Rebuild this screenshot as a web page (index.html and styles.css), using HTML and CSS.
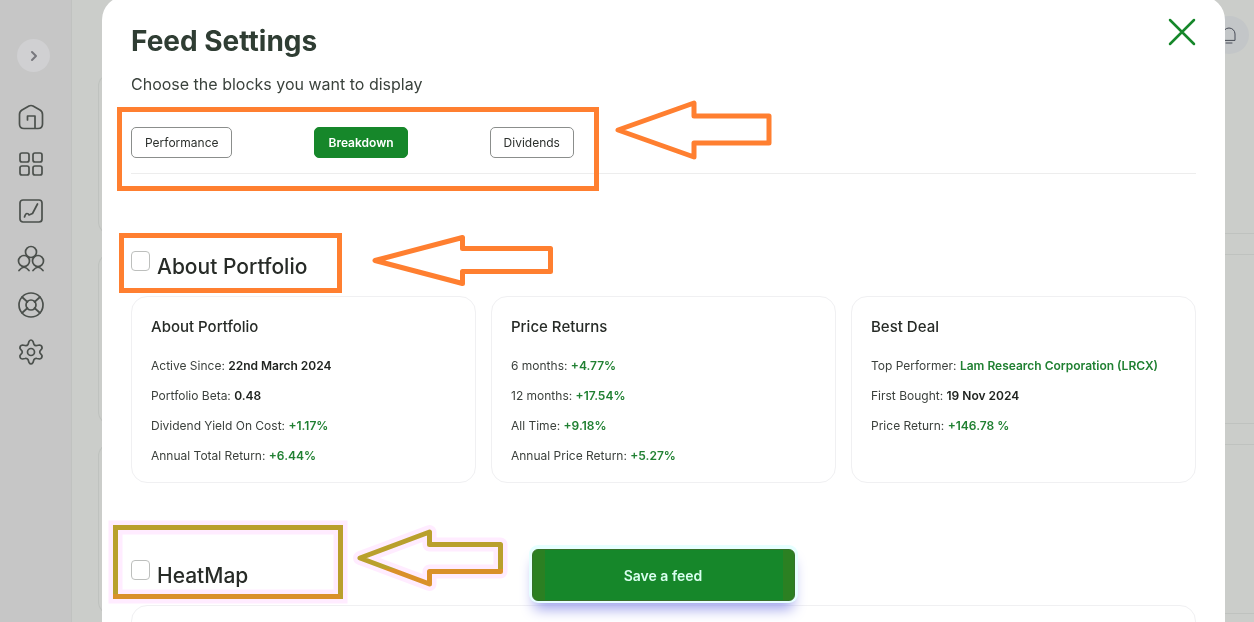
FILE: index.html
```html
<!DOCTYPE html>
<html lang="en">
<head>
<meta charset="utf-8">
<meta name="viewport" content="width=device-width, initial-scale=1">
<title>Feed Settings</title>
<link rel="stylesheet" href="styles.css">
</head>
<body>
<div class="page">
  <aside class="sidebar">
    <button class="expand" aria-label="Expand menu"><svg width="10" height="12" viewBox="0 0 10 12"><path d="M3 2l4 4-4 4"/></svg></button>
    <nav class="nav">
      <a href="#home" aria-label="Home"><svg width="28" height="28" viewBox="0 0 28 28"><path d="M7 25.500Q2.500 25.500 2.500 21V11.500Q2.500 8.500 5 7L12 3Q14 2 16 3L23 7Q25.500 8.500 25.500 11.500V21Q25.500 25.500 21 25.500H7M18 25V13H10.500V17"/></svg></a>
      <a href="#dashboard" aria-label="Dashboard"><svg width="28" height="28" viewBox="0 0 28 28"><rect x="3" y="3" width="9" height="9" rx="2"/><rect x="16" y="3" width="9" height="9" rx="2"/><rect x="3" y="16" width="9" height="9" rx="2"/><rect x="16" y="16" width="9" height="9" rx="2"/></svg></a>
      <a href="#charts" aria-label="Charts"><svg width="28" height="28" viewBox="0 0 28 28"><rect x="3" y="3" width="22" height="22" rx="3"/><path d="M7.500 20Q8.500 16.500 10 16.500T12 18L15.500 16.500L20.500 7"/></svg></a>
      <a href="#community" aria-label="Community"><svg width="28" height="28" viewBox="0 0 28 28"><circle cx="14" cy="8" r="5.500"/><circle cx="7" cy="17" r="5.500"/><circle cx="21" cy="17" r="5.500"/><path d="M2 26.500Q7 20 12 26.500M16 26.500Q21 20 26 26.500"/></svg></a>
      <a href="#help" aria-label="Help"><svg width="28" height="28" viewBox="0 0 28 28"><circle cx="14" cy="14" r="12"/><circle cx="14" cy="14" r="5"/><path d="M5 6l5.500 5M23 6l-5.500 5M5 22l5.500-5M23 22l-5.500-5"/></svg></a>
      <a href="#settings" aria-label="Settings"><svg width="28" height="28" viewBox="0 0 28 28"><path d="M12 3.500Q14 .500 16 3.500L17 6.500Q18 8 20 7.500L22.500 7Q25.500 7.500 25 10.500L23 13Q22.500 14 23 15L25 17.500Q25.500 20.500 22.500 21L20 20.500Q18 20 17 21.500L16 24.500Q14 27.500 12 24.500L11 21.500Q10 20 8 20.500L5.500 21Q2.500 20.500 3 17.500L5 15Q5.500 14 5 13L3 10.500Q2.500 7.500 5.500 7L8 7.500Q10 8 11 6.500Z"/><circle cx="14" cy="14" r="3.500"/></svg></a>
    </nav>
  </aside>
  <div class="backdrop">
    <div class="bell"><svg width="20" height="20" viewBox="0 0 20 20"><path d="M4 15V9a6 6 0 0 1 12 0v6zM7 18h6"/></svg></div>
    <div class="panel"></div>
    <div class="panel"></div>
    <div class="panel"></div>
  </div>
</div>

<div class="modal" role="dialog" aria-labelledby="title">
  <header class="head">
    <h1 id="title">Feed Settings</h1>
    <button class="close" aria-label="Close"><svg width="28" height="28" viewBox="0 0 28 28"><path d="M2 2l24 24M26 2L2 26"/></svg></button>
  </header>
  <p class="lead">Choose the blocks you want to display</p>
  <div class="tabs">
    <button class="tab">Performance</button>
    <button class="tab active">Breakdown</button>
    <button class="tab">Dividends</button>
  </div>

  <section class="block">
    <div class="block-head"><input type="checkbox" id="about"><label for="about">About Portfolio</label></div>
    <div class="cards">
      <article class="card">
        <h2>About Portfolio</h2>
        <p>Active Since: <b>22nd March 2024</b></p>
        <p>Portfolio Beta: <b>0.48</b></p>
        <p>Dividend Yield On Cost: <b class="up">+1.17%</b></p>
        <p>Annual Total Return: <b class="up">+6.44%</b></p>
      </article>
      <article class="card">
        <h2>Price Returns</h2>
        <p>6 months: <b class="up">+4.77%</b></p>
        <p>12 months: <b class="up">+17.54%</b></p>
        <p>All Time: <b class="up">+9.18%</b></p>
        <p>Annual Price Return: <b class="up">+5.27%</b></p>
      </article>
      <article class="card">
        <h2>Best Deal</h2>
        <p>Top Performer: <b class="up">Lam Research Corporation (LRCX)</b></p>
        <p>First Bought: <b>19 Nov 2024</b></p>
        <p>Price Return: <b class="up">+146.78 %</b></p>
      </article>
    </div>
  </section>

  <section class="block">
    <div class="block-head"><input type="checkbox" id="heatmap"><label for="heatmap">HeatMap</label></div>
    <div class="card map"></div>
  </section>
  <button class="save">Save a feed</button>
</div>

<svg class="marks" width="1254" height="622" viewBox="0 0 1254 622" aria-hidden="true">
  <defs>
    <linearGradient id="gold" x1="0" y1="0" x2="0" y2="1"><stop offset=".7" stop-color="#b9a02d"/><stop offset=".72" stop-color="#d9912a"/></linearGradient>
  </defs>
  <g class="orange">
    <rect x="119.500" y="109.500" width="477" height="79"/>
    <path d="M618 130L694 103V116H769V143H694V157Z"/>
    <rect x="121.500" y="235.500" width="218" height="55"/>
    <path d="M375 260.500L462.500 237.500V248.500H550.500V271.500H462.500V283.500Z"/>
  </g>
  <g class="halo">
    <rect x="115.500" y="527.500" width="225" height="69"/>
    <path d="M360 558L429.500 532V544.500H500.500V571.500H429.500V584Z"/>
  </g>
  <g class="gold">
    <rect x="115.500" y="527.500" width="225" height="69"/>
    <path d="M113 596.500H340" class="base"/>
    <path d="M360 558L429.500 532V544.500H500.500V571.500H429.500V584Z" class="shaded"/>
  </g>
</svg>
</body>
</html>
```
FILE: styles.css
```css
* { box-sizing: border-box; }

body {
  margin: 0;
  height: 100vh;
  overflow: hidden;
  position: relative;
  background: #cbcdca;
  color: #272b27;
  font-family: Inter, "Liberation Sans", sans-serif;
  font-size: 12px;
}

button { font: inherit; cursor: pointer; }
h1, h2, p { margin: 0; }
svg { display: block; fill: none; stroke-linecap: round; stroke-linejoin: round; }

.page { display: flex; height: 100%; }

.sidebar {
  width: 72px;
  padding: 39px 0 0 17px;
  background: #c6c6c6;
  border-right: 1px solid #c0c2c0;
}
.expand {
  display: grid;
  place-items: center;
  width: 33px;
  height: 33px;
  padding: 0;
  border: 0;
  border-radius: 50%;
  background: #d0d0d2;
}
.expand svg { stroke: #77777d; stroke-width: 2; }
.nav { display: grid; gap: 19px; margin-top: 31px; }
.nav svg { stroke: #4b504c; stroke-width: 1.7; }

.backdrop {
  flex: 1;
  display: flex;
  flex-direction: column;
  gap: 20px;
  padding: 16px 0 0 26px;
}
.bell {
  display: grid;
  place-items: center;
  align-self: flex-end;
  width: 40px;
  height: 38px;
  margin-right: 5px;
  border-radius: 50%;
  background: #c3c6c8;
}
.bell svg { stroke: #474b56; stroke-width: 1; }
.panel { flex: none; height: 170px; border: 1px solid #bfc2bf; border-right: 0; border-radius: 12px 0 0 12px; }
.panel:nth-child(2) { height: 160px; border-top-color: transparent; }

.modal {
  position: absolute;
  inset: -4px 29px 0 102px;
  padding: 24px 29px 0;
  overflow: hidden;
  border-radius: 24px 24px 0 0;
  background: #fff;
}
.head { display: flex; justify-content: space-between; align-items: flex-start; }
.head h1 { padding-top: 3px; font-size: 28px; line-height: 36px; font-weight: 700; color: #2f3d33; }
.close { padding: 0; border: 0; background: none; margin-top: -2px; }
.close svg { stroke: #16872a; stroke-width: 2.5; }
.lead { margin-top: 13px; font-size: 16px; line-height: 24px; color: #3a423c; }

.tabs {
  display: flex;
  gap: 82px;
  padding: 31px 0 15px;
  border-bottom: 1px solid #ededed;
}
.tab {
  height: 31px;
  padding: 0 13px;
  border: 1px solid #8b8e8c;
  border-radius: 5px;
  background: #fff;
  color: #2c302d;
}
.tab.active { border-color: #16872a; background: #16872a; color: #fff; font-weight: 600; }

.block { padding-top: 69px; }
.block-head { display: flex; align-items: center; gap: 7px; height: 45px; margin-bottom: 8px; }
.block-head input {
  appearance: none;
  width: 19px;
  height: 20px;
  margin: 0 0 10px;
  border: 1px solid #bdbfbd;
  border-radius: 4px;
  background: #fff;
}
.block-head label { padding-top: 2px; font-size: 21px; line-height: 28px; font-weight: 500; }

.cards { display: grid; grid-template-columns: repeat(3, minmax(0, 1fr)); gap: 15px; }
.card { padding: 20px 19px 11px; border: 1px solid #f0f0f2; border-radius: 16px; }
.card h2 { margin-bottom: 14px; font-size: 15px; line-height: 20px; font-weight: 500; }
.card p { line-height: 30px; color: #3b403c; white-space: nowrap; }
.card b { font-weight: 600; color: #202420; }
.card .up { color: #208032; }
.map { height: 180px; }

.save {
  position: absolute;
  left: 50%;
  bottom: 21px;
  width: 263px;
  height: 52px;
  margin-left: -132px;
  border: 1px solid #36702a;
  border-radius: 6px;
  background: linear-gradient(90deg, #2b8022 12px, #16872a 12px calc(100% - 11px), #2b8022 0);
  box-shadow: 0 -1px 0 3px #e6ffff, 0 10px 14px -2px #9ea2eb;
  color: #d9ffef;
  font-size: 14px;
  font-weight: 600;
}

.marks { position: absolute; top: 0; left: 0; pointer-events: none; }
.marks rect { stroke-linejoin: miter; }
.orange { stroke: #ff7f30; stroke-width: 5; }
.halo { stroke: #ffecff; stroke-width: 14; mix-blend-mode: multiply; }
.gold { stroke: #b9a02d; stroke-width: 5; }
.shaded { stroke: url(#gold); }
.base { stroke: #d9912a; stroke-linecap: butt; }
```
